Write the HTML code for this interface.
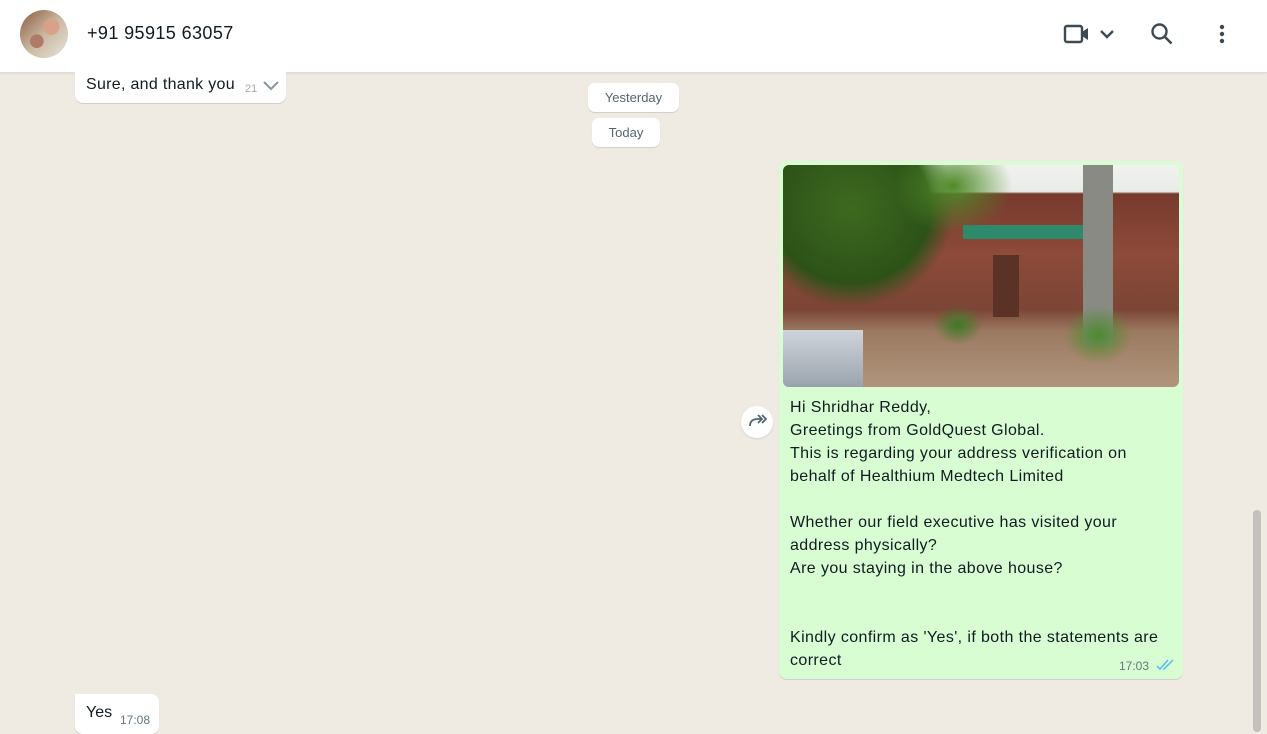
<!DOCTYPE html>
<html><head><style>
*{margin:0;padding:0;box-sizing:border-box}
body{width:1267px;height:732px;overflow:hidden;background:#efeae2;font-family:"Segoe UI","Liberation Sans",sans-serif;position:relative;color:#111b21}
.hdr{position:absolute;left:0;top:0;width:1267px;height:73px;background:#fff;border-bottom:1px solid #e0ddd8;box-shadow:0 1px 2px rgba(0,0,0,.06)}
.av{position:absolute;left:20px;top:10px;width:48px;height:48px;border-radius:50%;background:radial-gradient(circle at 65% 35%,#d9a08a 0 18%,transparent 19%),radial-gradient(circle at 35% 65%,#b07a68 0 15%,transparent 16%),linear-gradient(135deg,#8a5a40,#c9b7a0 50%,#e8e4dc)}
.name{position:absolute;left:87px;top:23px;font-size:18px;color:#111b21;letter-spacing:0.4px}
.b{position:absolute;background:#fff;border-radius:8px;box-shadow:0 1px 0.5px rgba(11,20,26,.13);font-size:16px}
.pill{position:absolute;background:#fff;border-radius:7px;font-size:13px;color:#54656f;text-align:center;box-shadow:0 1px 0.5px rgba(11,20,26,.13);height:29px;line-height:29px}
.g{position:absolute;left:779px;top:161px;width:404px;height:518px;background:#d9fdd3;border-radius:8px;box-shadow:0 1px 0.5px rgba(11,20,26,.13)}
.img{position:absolute;left:4px;top:4px;width:396px;height:222px;border-radius:6px;overflow:hidden;background:linear-gradient(180deg,#f2f2f0 0,#e8ece8 12%,transparent 13%),linear-gradient(180deg,#6b3328 0,#8e4a3a 40%,#7b4535 65%,#9c7a62 75%,#b0957c 100%)}
.txt{position:absolute;left:11px;top:235px;font-size:16px;line-height:23px;color:#111b21;white-space:pre;letter-spacing:0.4px}
</style></head><body>
<div class="hdr">
<div class="av"></div>
<div class="name">+91 95915 63057</div>
<svg style="position:absolute;left:1063px;top:23px" width="56" height="22" viewBox="0 0 56 22"><rect x="2" y="3" width="17" height="16" rx="2" fill="none" stroke="#3b4a54" stroke-width="2.4"/><path d="M19 9l6-4v12l-6-4z" fill="#3b4a54"/><path d="M38 8l6 6 6-6" fill="none" stroke="#3b4a54" stroke-width="2.4"/></svg>
<svg style="position:absolute;left:1150px;top:22px" width="24" height="24" viewBox="0 0 24 24"><circle cx="9.5" cy="9.5" r="7" fill="none" stroke="#3b4a54" stroke-width="2.4"/><path d="M14.5 14.5l7 7" stroke="#3b4a54" stroke-width="2.6"/></svg>
<svg style="position:absolute;left:1216px;top:23px" width="12" height="24" viewBox="0 0 12 24"><circle cx="6" cy="4" r="2.2" fill="#3b4a54"/><circle cx="6" cy="11" r="2.2" fill="#3b4a54"/><circle cx="6" cy="18" r="2.2" fill="#3b4a54"/></svg>
</div>
<div class="b" style="left:75px;top:71px;width:211px;height:32px;border-radius:0 0 8px 8px"><span style="position:absolute;left:11px;top:5px;letter-spacing:0.3px">Sure, and thank you</span><span style="position:absolute;left:170px;top:12px;font-size:11px;color:#aaa">21</span><svg style="position:absolute;left:187px;top:9px" width="18" height="12" viewBox="0 0 18 12"><path d="M2 2l7 7 7-7" fill="none" stroke="#8696a0" stroke-width="2"/></svg></div>
<div class="pill" style="left:588px;top:83px;width:91px">Yesterday</div>
<div class="pill" style="left:592px;top:118px;width:68px">Today</div>
<div style="position:absolute;left:741px;top:406px;width:32px;height:32px;border-radius:50%;background:#fff;box-shadow:0 1px 2px rgba(0,0,0,.1)"><svg width="32" height="32" viewBox="0 0 32 32"><path d="M9 20c0-5 3-7 8-7h3M17 9l4 4-4 4M21 9l4 4-4 4" fill="none" stroke="#54656f" stroke-width="1.8"/></svg></div>
<div class="g">
<div class="img">
<div style="position:absolute;left:0;top:0;width:170px;height:140px;background:radial-gradient(ellipse at 40% 30%,#3d6a1f,#2d5218 55%,transparent 72%)"></div>
<div style="position:absolute;left:110px;top:0;width:120px;height:70px;background:radial-gradient(ellipse at 50% 30%,#4f8a28,transparent 70%)"></div>
<div style="position:absolute;left:180px;top:60px;width:140px;height:14px;background:#2e8a6a"></div>
<div style="position:absolute;left:300px;top:0;width:30px;height:180px;background:#8a8a84"></div>
<div style="position:absolute;left:210px;top:90px;width:26px;height:62px;background:#5a3226"></div>
<div style="position:absolute;left:0;top:165px;width:80px;height:57px;background:linear-gradient(#cfd4da,#9aa3ac)"></div>
<div style="position:absolute;left:280px;top:140px;width:70px;height:60px;background:radial-gradient(ellipse,#4e8a2e,transparent 70%)"></div>
<div style="position:absolute;left:150px;top:140px;width:50px;height:40px;background:radial-gradient(ellipse,#3e7a26,transparent 70%)"></div>
</div>
<div class="txt">Hi Shridhar Reddy,
Greetings from GoldQuest Global.
This is regarding your address verification on
behalf of Healthium Medtech Limited

Whether our field executive has visited your
address physically?
Are you staying in the above house?


Kindly confirm as 'Yes', if both the statements are
correct</div>
<span style="position:absolute;left:340px;top:498px;font-size:12px;color:#667781">17:03</span>
<svg style="position:absolute;left:377px;top:498px" width="18" height="12" viewBox="0 0 18 12"><path d="M1 7l3 3L12 1M7 10l1 0L17 1" fill="none" stroke="#53bdeb" stroke-width="1.5"/></svg>
</div>
<div class="b" style="left:75px;top:694px;width:84px;height:40px;border-radius:0 8px 8px 8px"><span style="position:absolute;left:11px;top:10px">Yes</span><span style="position:absolute;left:45px;top:19px;font-size:12px;color:#667781">17:08</span></div>
<div style="position:absolute;left:1253px;top:510px;width:8px;height:222px;background:#c4c1bd;border-radius:4px"></div>
</body></html>
